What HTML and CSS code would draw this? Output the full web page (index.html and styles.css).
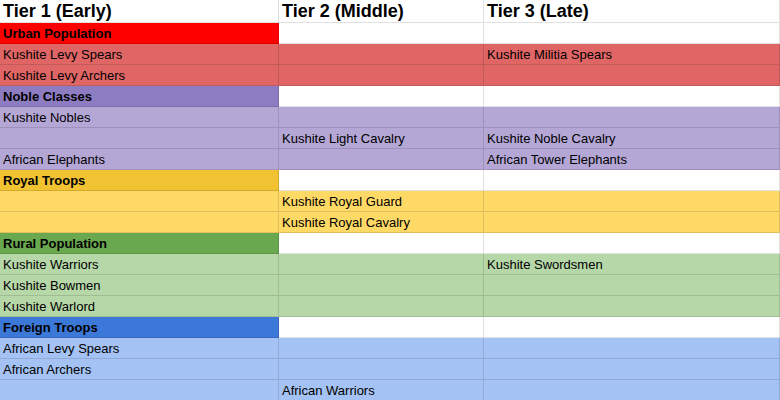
FILE: index.html
```html
<!DOCTYPE html>
<html>
<head>
<meta charset="utf-8">
<link rel="stylesheet" href="styles.css">
</head>
<body>
<div class="sheet">
  <div class="c head">Tier 1 (Early)</div><div class="c head">Tier 2 (Middle)</div><div class="c head">Tier 3 (Late)</div>

  <div class="c cat red">Urban Population</div><div class="c"></div><div class="c"></div>
  <div class="c lred">Kushite Levy Spears</div><div class="c lred"></div><div class="c lred">Kushite Militia Spears</div>
  <div class="c lred">Kushite Levy Archers</div><div class="c lred"></div><div class="c lred"></div>

  <div class="c cat purple">Noble Classes</div><div class="c"></div><div class="c"></div>
  <div class="c lpurple">Kushite Nobles</div><div class="c lpurple"></div><div class="c lpurple"></div>
  <div class="c lpurple"></div><div class="c lpurple">Kushite Light Cavalry</div><div class="c lpurple">Kushite Noble Cavalry</div>
  <div class="c lpurple">African Elephants</div><div class="c lpurple"></div><div class="c lpurple">African Tower Elephants</div>

  <div class="c cat yellow">Royal Troops</div><div class="c"></div><div class="c"></div>
  <div class="c lyellow"></div><div class="c lyellow">Kushite Royal Guard</div><div class="c lyellow"></div>
  <div class="c lyellow"></div><div class="c lyellow">Kushite Royal Cavalry</div><div class="c lyellow"></div>

  <div class="c cat green">Rural Population</div><div class="c"></div><div class="c"></div>
  <div class="c lgreen">Kushite Warriors</div><div class="c lgreen"></div><div class="c lgreen">Kushite Swordsmen</div>
  <div class="c lgreen">Kushite Bowmen</div><div class="c lgreen"></div><div class="c lgreen"></div>
  <div class="c lgreen">Kushite Warlord</div><div class="c lgreen"></div><div class="c lgreen"></div>

  <div class="c cat blue">Foreign Troops</div><div class="c"></div><div class="c"></div>
  <div class="c lblue">African Levy Spears</div><div class="c lblue"></div><div class="c lblue"></div>
  <div class="c lblue">African Archers</div><div class="c lblue"></div><div class="c lblue"></div>
  <div class="c lblue"></div><div class="c lblue">African Warriors</div><div class="c lblue"></div>
</div>
</body>
</html>
```
FILE: styles.css
```css
html, body {
  margin: 0;
  padding: 0;
  background: #ffffff;
  overflow: hidden;
}
.sheet {
  display: grid;
  grid-template-columns: 279px 205px 296px;
  grid-template-rows: 23px;
  grid-auto-rows: 21px;
  font-family: "Liberation Sans", Arial, sans-serif;
  font-size: 13px;
  color: #000000;
}
.c {
  box-sizing: border-box;
  border-right: 1px solid rgba(0, 0, 0, 0.12);
  border-bottom: 1px solid rgba(0, 0, 0, 0.12);
  padding: 1px 3px 0 3px;
  line-height: 19px;
  white-space: nowrap;
  overflow: hidden;
  background: #ffffff;
}
.head {
  font-size: 18px;
  font-weight: bold;
  line-height: 22px;
  padding-top: 0;
}
.cat { font-weight: bold; }
.red { background: #ff0000; }
.lred { background: #e06666; }
.purple { background: #8e7cc3; }
.lpurple { background: #b4a7d6; }
.yellow { background: #f1c232; }
.lyellow { background: #ffd966; }
.green { background: #6aa84f; }
.lgreen { background: #b6d7a8; }
.blue { background: #3c78d8; }
.lblue { background: #a4c2f4; }
```
